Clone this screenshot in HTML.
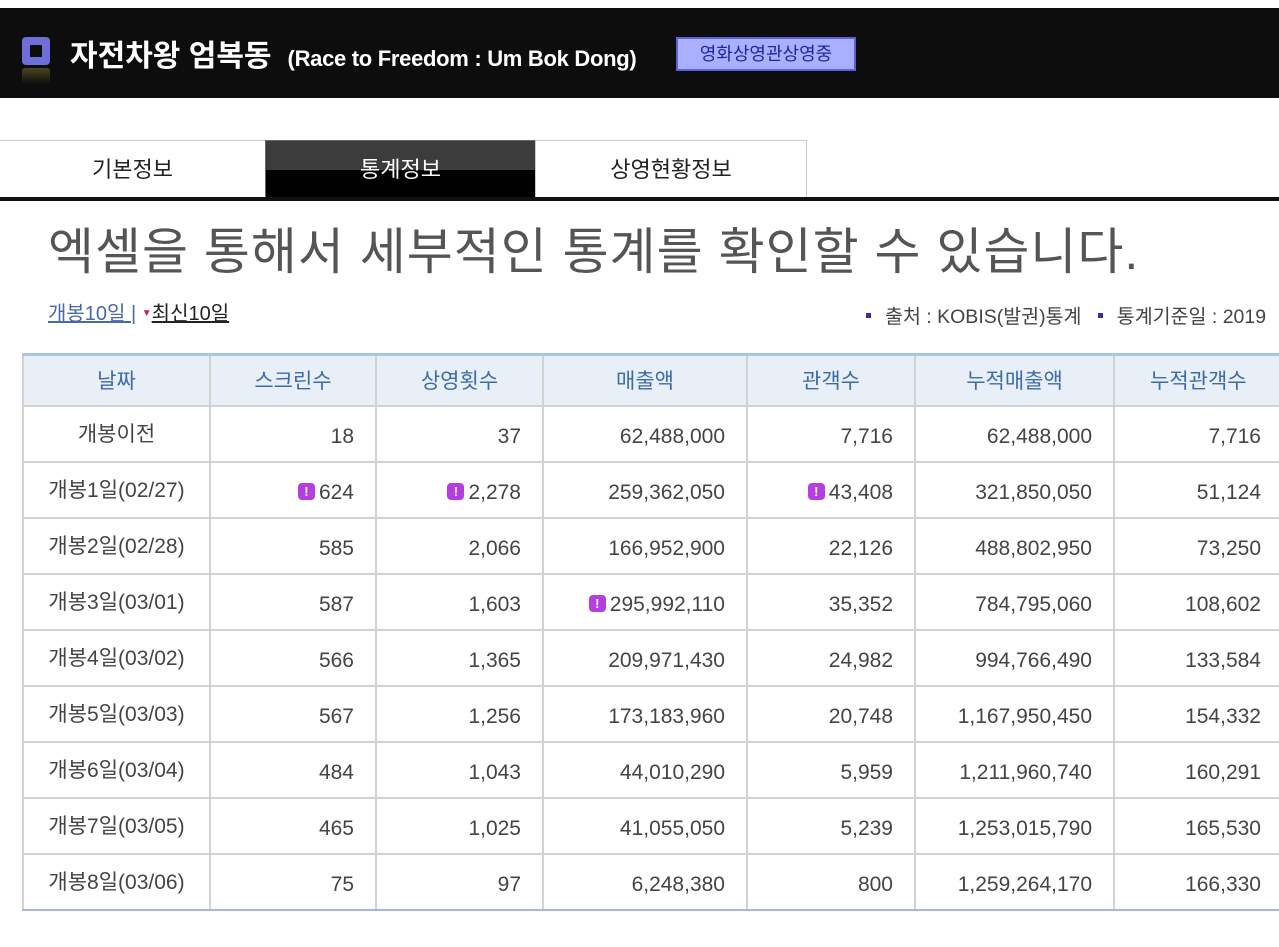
<!DOCTYPE html>
<html><head><meta charset="utf-8"><style>
*{margin:0;padding:0;box-sizing:border-box}
body{width:1279px;height:947px;overflow:hidden;background:#fff;font-family:"Liberation Sans","Noto Sans CJK KR",sans-serif;position:relative}
.bar{position:absolute;top:8px;left:0;width:1279px;height:90px;background:#0d0d0d}
.ico{position:absolute;left:22px;top:37px;width:28px;height:28px;background:#6f6fd8;border-radius:4px}
.ico:after{content:"";position:absolute;left:8px;top:8px;width:12px;height:12px;background:#0d0d0d}
.refl{position:absolute;left:22px;top:68px;width:28px;height:16px;background:linear-gradient(#4a4520,#0d0d0d);border-radius:3px}
.title{position:absolute;left:70px;top:31px;color:#fff;font-size:30px;font-weight:bold;white-space:nowrap}
.title small{font-size:22px;margin-left:16px;letter-spacing:-0.3px}
.badge{position:absolute;left:676px;top:37px;width:180px;height:34px;background:#aab0ff;border:2px solid #5a62d8;color:#1a2a9a;font-size:18px;text-align:center;line-height:30px}
.tab{position:absolute;top:140px;height:59px;border:1px solid #ccc;border-bottom:none;font-size:22px;text-align:center;line-height:58px;color:#222}
.tab.on{background:linear-gradient(#3c3c3c 50%,#000 50%);color:#fff;border-color:#666}
.line{position:absolute;top:197px;left:0;width:1279px;height:4px;background:#111}
h1{position:absolute;left:48px;top:212px;font-size:50px;font-weight:normal;color:#555;white-space:nowrap;letter-spacing:1px}
.links{position:absolute;left:48px;top:297px;font-size:20px;color:#333}
.links a{color:#4a68a8;text-decoration:underline}
.links b{font-weight:normal;text-decoration:underline;color:#222}
.tri{color:#c0205a;font-size:10px;vertical-align:4px}
.src{position:absolute;left:866px;top:300px;font-size:19.5px;color:#444;white-space:nowrap}
.sq{display:inline-block;width:5px;height:5px;background:#333399;vertical-align:5px;margin-right:14px}
table{position:absolute;left:22px;top:353px;width:1300px;table-layout:fixed;border-collapse:collapse;border-top:3px solid #a9c6e4;font-size:21px;color:#444}
th{background:#e8eff7;color:#3d6ba8;font-weight:normal;height:51px;border:2px solid #d2d2d2;border-top:none}
td{height:56px;border:2px solid #d2d2d2;text-align:right;padding:6px 21px 0 0;line-height:24px;vertical-align:middle}
td:first-child{text-align:center;padding:3px 0 0 0}
tr:last-child td{border-bottom:2px solid #aab6dc}
td.l{padding-right:61px}
.x{display:inline-block;width:17px;height:17px;background:#b43ee0;border-radius:4px;color:#fff;font-size:13px;font-weight:bold;text-align:center;line-height:17px;vertical-align:3px;margin-right:4px}
</style></head><body>
<div class="bar"></div><div class="ico"></div><div class="refl"></div>
<div class="title">자전차왕 엄복동<small>(Race to Freedom : Um Bok Dong)</small></div>
<div class="badge">영화상영관상영중</div>
<div class="tab" style="left:0;width:266px;border-left:none">기본정보</div>
<div class="tab on" style="left:265px;width:271px">통계정보</div>
<div class="tab" style="left:535px;width:272px">상영현황정보</div>
<div class="line"></div>
<h1>엑셀을 통해서 세부적인 통계를 확인할 수 있습니다.</h1>
<div class="links"><a>개봉10일 |</a> <span class="tri">▼</span><b>최신10일</b></div>
<div class="src"><span class="sq"></span>출처 : KOBIS(발권)통계 &nbsp; <span class="sq"></span>통계기준일 : 2019</div>
<table>
<colgroup><col style="width:187px"><col style="width:166px"><col style="width:167px"><col style="width:204px"><col style="width:168px"><col style="width:199px"><col style="width:209px"></colgroup>
<tr><th>날짜</th><th>스크린수</th><th>상영횟수</th><th>매출액</th><th>관객수</th><th>누적매출액</th><th style="text-align:left;padding-left:35px">누적관객수</th></tr>
<tr><td>개봉이전</td><td>18</td><td>37</td><td>62,488,000</td><td>7,716</td><td>62,488,000</td><td class="l">7,716</td></tr>
<tr><td>개봉1일(02/27)</td><td><span class="x">!</span>624</td><td><span class="x">!</span>2,278</td><td>259,362,050</td><td><span class="x">!</span>43,408</td><td>321,850,050</td><td class="l">51,124</td></tr>
<tr><td>개봉2일(02/28)</td><td>585</td><td>2,066</td><td>166,952,900</td><td>22,126</td><td>488,802,950</td><td class="l">73,250</td></tr>
<tr><td>개봉3일(03/01)</td><td>587</td><td>1,603</td><td><span class="x">!</span>295,992,110</td><td>35,352</td><td>784,795,060</td><td class="l">108,602</td></tr>
<tr><td>개봉4일(03/02)</td><td>566</td><td>1,365</td><td>209,971,430</td><td>24,982</td><td>994,766,490</td><td class="l">133,584</td></tr>
<tr><td>개봉5일(03/03)</td><td>567</td><td>1,256</td><td>173,183,960</td><td>20,748</td><td>1,167,950,450</td><td class="l">154,332</td></tr>
<tr><td>개봉6일(03/04)</td><td>484</td><td>1,043</td><td>44,010,290</td><td>5,959</td><td>1,211,960,740</td><td class="l">160,291</td></tr>
<tr><td>개봉7일(03/05)</td><td>465</td><td>1,025</td><td>41,055,050</td><td>5,239</td><td>1,253,015,790</td><td class="l">165,530</td></tr>
<tr><td>개봉8일(03/06)</td><td>75</td><td>97</td><td>6,248,380</td><td>800</td><td>1,259,264,170</td><td class="l">166,330</td></tr>
</table>
</body></html>
